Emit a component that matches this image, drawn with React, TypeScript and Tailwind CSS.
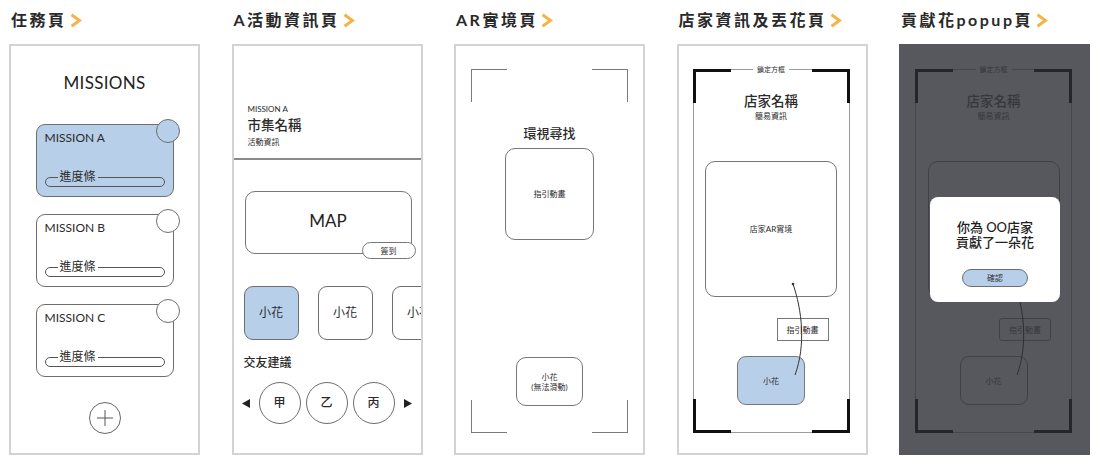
import React from "react";

function Chevron() {
  return (
    <svg width="13" height="15" viewBox="0 0 13 15" className="ml-[2px]">
      <polyline points="2.5,1.8 10.5,7.5 2.5,13.2" fill="none" stroke="#f5b445" strokeWidth="3" strokeLinejoin="miter" />
    </svg>
  );
}

function Title({ text }: { text: string }) {
  return (
    <div className="h-[40px] flex items-center pl-[2px] text-[16px] font-bold tracking-[2.5px] text-[#2a2a2a] whitespace-nowrap">
      <span>{text}</span>
      <Chevron />
    </div>
  );
}

function MissionCard({ label, active }: { label: string; active?: boolean }) {
  const bg = active ? "bg-[#b8cfe9]" : "bg-white";
  return (
    <div className={`relative w-[138px] h-[73px] rounded-[9px] border border-[#6e6e6e] ${bg}`}>
      <div className={`absolute -top-[6px] -right-[7px] w-[24px] h-[24px] rounded-full border border-[#6e6e6e] ${bg}`} />
      <div className="pl-[8px] pt-[5px] text-[12px] leading-[16px] text-[#2a2a2a]">{label}</div>
      <div className="relative mx-[8px] mt-[31px] h-[10px] rounded-full border border-[#555]">
        <span className={`absolute left-[12px] -top-[9px] px-[2px] text-[12px] leading-[16px] text-[#2a2a2a] ${bg}`}>進度條</span>
      </div>
    </div>
  );
}

function PlusButton() {
  return (
    <div className="w-[32px] h-[32px] rounded-full border border-[#666] flex items-center justify-center">
      <svg width="18" height="18" viewBox="0 0 18 18">
        <line x1="9" y1="1" x2="9" y2="17" stroke="#555" strokeWidth="1" />
        <line x1="1" y1="9" x2="17" y2="9" stroke="#555" strokeWidth="1" />
      </svg>
    </div>
  );
}

function Panel1() {
  return (
    <div className="relative h-[411px] border-2 border-[#d3d3d3] flex flex-col items-center">
      <div className="mt-[25px] h-[24px] leading-[24px] text-[17px] text-[#222] tracking-[0.3px]">MISSIONS</div>
      <div className="mt-[29px] flex flex-col gap-[17px]">
        <MissionCard label="MISSION A" active />
        <MissionCard label="MISSION B" />
        <MissionCard label="MISSION C" />
      </div>
      <div className="mt-[25px]">
        <PlusButton />
      </div>
    </div>
  );
}

function Tri({ dir }: { dir: "l" | "r" }) {
  return (
    <svg width="8" height="9" viewBox="0 0 8 9">
      {dir === "l" ? <polygon points="8,0 8,9 0,4.5" fill="#222" /> : <polygon points="0,0 0,9 8,4.5" fill="#222" />}
    </svg>
  );
}

function Panel2() {
  return (
    <div className="relative h-[411px] border-2 border-[#d3d3d3] overflow-hidden">
      <div className="h-[114px] border-b-2 border-[#8a8a8a] pl-[14px] pt-[58px] text-[#2a2a2a]">
        <div className="text-[8px] leading-[10px]">MISSION A</div>
        <div className="mt-[2px] text-[13.5px] leading-[18px] font-medium">市集名稱</div>
        <div className="mt-[3px] text-[8px] leading-[10px]">活動資訊</div>
      </div>
      <div className="relative ml-[11px] mt-[31px] w-[167px] h-[63px] rounded-[10px] border border-[#777] flex items-center justify-center">
        <span className="text-[17px] leading-[20px] text-[#222] -mt-[4px]">MAP</span>
        <div className="absolute -right-[5px] -bottom-[6px] w-[54px] h-[17px] rounded-full border border-[#777] bg-white flex items-center justify-center text-[8px] text-[#333]">
          簽到
        </div>
      </div>
      <div className="ml-[10px] mt-[32px] flex gap-[19px]">
        <div className="shrink-0 w-[55px] h-[54px] rounded-[9px] border border-[#6e6e6e] bg-[#b8cfe9] flex items-center justify-center text-[12px] text-[#2a2a2a]">小花</div>
        <div className="shrink-0 w-[55px] h-[54px] rounded-[9px] border border-[#6e6e6e] bg-white flex items-center justify-center text-[12px] text-[#2a2a2a]">小花</div>
        <div className="shrink-0 w-[55px] h-[54px] rounded-[9px] border border-[#6e6e6e] bg-white flex items-center justify-center text-[12px] text-[#2a2a2a]">小花</div>
      </div>
      <div className="ml-[10px] mt-[15px] text-[12px] leading-[16px] font-medium text-[#2a2a2a]">交友建議</div>
      <div className="ml-[8px] mt-[11px] flex items-center">
        <Tri dir="l" />
        <div className="ml-[9px] flex gap-[5px]">
          {["甲", "乙", "丙"].map((c) => (
            <div key={c} className="w-[42px] h-[42px] rounded-full border border-[#6e6e6e] flex items-center justify-center text-[12px] font-medium text-[#2a2a2a]">
              {c}
            </div>
          ))}
        </div>
        <div className="ml-[9px]">
          <Tri dir="r" />
        </div>
      </div>
    </div>
  );
}

function Panel3() {
  const c = "absolute w-[36px] h-[33px] border-[#7a7a7a]";
  return (
    <div className="relative h-[411px] border-2 border-[#d3d3d3] flex flex-col items-center text-[#2a2a2a]">
      <div className={`${c} left-[15px] top-[23px] border-t-[1.5px] border-l-[1.5px]`} />
      <div className={`${c} right-[15px] top-[23px] border-t-[1.5px] border-r-[1.5px]`} />
      <div className={`${c} left-[15px] bottom-[20px] border-b-[1.5px] border-l-[1.5px]`} />
      <div className={`${c} right-[15px] bottom-[20px] border-b-[1.5px] border-r-[1.5px]`} />
      <div className="mt-[78px] text-[13px] leading-[18px] font-medium">環視尋找</div>
      <div className="mt-[6px] w-[89px] h-[92px] rounded-[10px] border border-[#777] flex items-center justify-center text-[8px] leading-[10px]">
        指引動畫
      </div>
      <div className="mt-[117px] w-[67px] h-[49px] rounded-[10px] border border-[#777] flex flex-col items-center justify-center text-[8px] leading-[10px]">
        <span>小花</span>
        <span>(無法滑動)</span>
      </div>
    </div>
  );
}

function StoreFrame({ dark }: { dark?: boolean }) {
  const line = dark ? "border-[#46474c]" : "border-[#9c9c9c]";
  const corner = dark ? "border-[#25262a]" : "border-[#111]";
  const text = dark ? "text-[#36373c]" : "text-[#2a2a2a]";
  const box = dark ? "border-[#404146]" : "border-[#777]";
  const labelBg = dark ? "bg-[#57585e]" : "bg-white";
  const flowerBg = dark ? "bg-transparent" : "bg-[#b8cfe9]";
  const curve = dark ? "#2e2f33" : "#333";
  const k = `absolute w-[38px] h-[34px] ${corner}`;
  return (
    <div className={`relative ml-[14px] mt-[23px] w-[157px] h-[364px] border ${line} ${text}`}>
      <div className={`${k} -left-[1px] -top-[1px] border-t-[3px] border-l-[3px]`} />
      <div className={`${k} -right-[1px] -top-[1px] border-t-[3px] border-r-[3px]`} />
      <div className={`${k} -left-[1px] -bottom-[1px] border-b-[3px] border-l-[3px]`} />
      <div className={`${k} -right-[1px] -bottom-[1px] border-b-[3px] border-r-[3px]`} />
      <div className={`absolute left-1/2 -translate-x-1/2 -top-[6px] px-[4px] text-[7px] leading-[10px] ${labelBg}`}>鎖定方框</div>
      <div className="flex flex-col items-center">
        <div className="mt-[22px] text-[13.5px] leading-[18px] font-medium">店家名稱</div>
        <div className="mt-[1px] text-[8px] leading-[10px]">簡易資訊</div>
        <div className={`mt-[40px] w-[132px] h-[136px] rounded-[10px] border ${box} flex items-center justify-center text-[8px]`}>
          店家AR實境
        </div>
        <div className={`mt-[59px] w-[68px] h-[49px] rounded-[9px] border ${box} ${flowerBg} flex items-center justify-center text-[8px]`}>
          小花
        </div>
      </div>
      <div className={`absolute left-[83px] top-[248px] w-[52px] h-[23px] border ${box} ${dark ? "rounded-[3px]" : ""} ${labelBg} flex items-center justify-center text-[8px]`}>
        指引動畫
      </div>
      <svg className="absolute left-0 top-0 pointer-events-none overflow-visible" width="157" height="364">
        <path d="M99 214 C 108 240, 112 275, 101 305" fill="none" stroke={curve} strokeWidth="1" />
        <circle cx="99" cy="214" r="1.3" fill={curve} />
      </svg>
    </div>
  );
}

function Panel4() {
  return (
    <div className="relative h-[411px] border-2 border-[#d3d3d3]">
      <StoreFrame />
    </div>
  );
}

function Panel5() {
  return (
    <div className="relative h-[411px] border-2 border-[#57585e] bg-[#57585e]">
      <StoreFrame dark />
      <div className="absolute left-[29px] top-[151px] w-[130px] h-[105px] rounded-[8px] bg-white flex flex-col items-center text-[#222]">
        <div className="mt-[23px] flex flex-col items-center text-[13px] font-medium">
          <div className="leading-[15px]">你為 OO店家</div>
          <div className="leading-[15px]">貢獻了一朵花</div>
        </div>
        <div className="mt-[19px] w-[66px] h-[18px] rounded-full border border-[#6e6e6e] bg-[#b8cfe9] flex items-center justify-center text-[8px] text-[#333]">
          確認
        </div>
      </div>
    </div>
  );
}

export default function App() {
  return (
    <div className="w-[1112px] h-[466px] bg-white overflow-hidden font-['Lato','Noto_Sans_CJK_TC',sans-serif]">
      <div className="flex pl-[9px] gap-[31.5px]">
        <div className="w-[191px] shrink-0">
          <Title text="任務頁" />
          <div className="mt-[4px]"><Panel1 /></div>
        </div>
        <div className="w-[191px] shrink-0">
          <Title text="A活動資訊頁" />
          <div className="mt-[4px]"><Panel2 /></div>
        </div>
        <div className="w-[191px] shrink-0">
          <Title text="AR實境頁" />
          <div className="mt-[4px]"><Panel3 /></div>
        </div>
        <div className="w-[191px] shrink-0">
          <Title text="店家資訊及丟花頁" />
          <div className="mt-[4px]"><Panel4 /></div>
        </div>
        <div className="w-[191px] shrink-0">
          <Title text="貢獻花popup頁" />
          <div className="mt-[4px]"><Panel5 /></div>
        </div>
      </div>
    </div>
  );
}
